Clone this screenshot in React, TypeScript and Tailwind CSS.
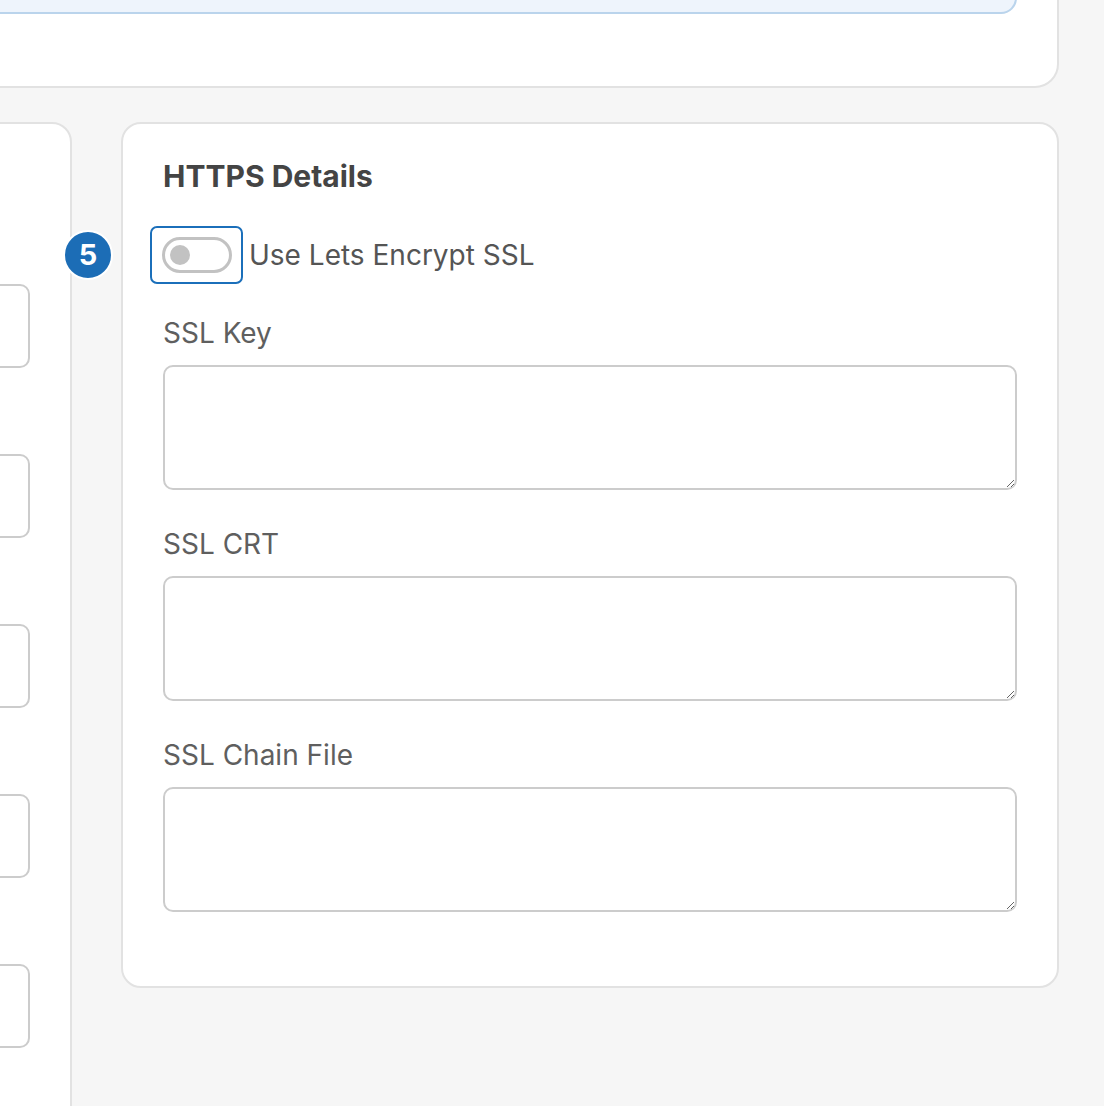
import { useState } from "react";

const FONT = { fontFamily: "Inter, 'Noto Sans', sans-serif" };

const SITE_FIELDS = ["Domain", "Root Path", "PHP Version", "Aliases", "Web Server"];
const SSL_FIELDS = ["SSL Key", "SSL CRT", "SSL Chain File"];

function Toggle({ checked, onChange }: { checked: boolean; onChange: (v: boolean) => void }) {
  return (
    <button
      type="button"
      role="switch"
      aria-checked={checked}
      onClick={() => onChange(!checked)}
      className="flex h-[58px] w-[93px] items-center justify-center rounded-[7px] border-[2.5px] border-[#1b6fba] bg-white"
    >
      <span
        className={
          checked
            ? "flex h-[36px] w-[70px] items-center justify-end rounded-full border-[3px] border-[#1b6fba] bg-[#1b6fba] px-[5px]"
            : "flex h-[36px] w-[70px] items-center justify-start rounded-full border-[3px] border-[#c2c2c2] bg-white px-[5px]"
        }
      >
        <span
          className={
            checked
              ? "block h-[20px] w-[20px] rounded-full bg-white"
              : "block h-[20px] w-[20px] rounded-full bg-[#c2c2c2]"
          }
        />
      </span>
    </button>
  );
}

function FieldLabel({ children }: { children: React.ReactNode }) {
  return <label className="mb-[15px] block text-[28px] leading-[34px] text-[#5f5f5f]">{children}</label>;
}

export default function App() {
  const [letsEncrypt, setLetsEncrypt] = useState(false);

  return (
    <div className="h-screen overflow-hidden bg-[#f6f6f6]" style={FONT}>
      <div className="-ml-[460px] -mt-[160px] flex w-[1519px] flex-col gap-[34px]">
        {/* Top card with info box */}
        <div className="rounded-3xl border-2 border-[#e2e2e2] bg-white px-10 pt-10 pb-[72px]">
          <div className="h-[132px] rounded-2xl border-2 border-[#bad4ec] bg-[#eef4fc]" />
        </div>

        <div className="grid grid-cols-[532px_938px] items-start gap-[49px]">
          {/* Site details: only the right edge of the fields is in view */}
          <div className="h-[1100px] rounded-[20px] border-2 border-[#e2e2e2] bg-white px-10 pt-[160px]">
            <div className="flex flex-col gap-[86px]">
              {SITE_FIELDS.map((f) => (
                <input
                  key={f}
                  aria-label={f}
                  className="block h-[84px] w-full rounded-[10px] border-2 border-[#cccccc] bg-white"
                />
              ))}
            </div>
          </div>

          {/* HTTPS details */}
          <div className="relative rounded-[20px] border-2 border-[#e2e2e2] bg-white px-10 pt-[34px] pb-[74px]">
            <div className="absolute left-[-60px] top-[106px] flex h-[50px] w-[50px] items-center justify-center rounded-full border-2 border-white bg-[#1c6db6] text-[29px] font-bold text-white">
              5
            </div>
            <h2 className="text-[30px] font-bold leading-[36px] text-[#444]">HTTPS Details</h2>
            <div className="-ml-[13px] mt-[32px] flex items-center gap-[6px]">
              <Toggle checked={letsEncrypt} onChange={setLetsEncrypt} />
              <span className="text-[28px] leading-[34px] text-[#555]">Use Lets Encrypt SSL</span>
            </div>
            <div className="mt-[32px] flex flex-col gap-[37px]">
              {SSL_FIELDS.map((f) => (
                <div key={f}>
                  <FieldLabel>{f}</FieldLabel>
                  <textarea className="block h-[125px] w-full rounded-[10px] border-2 border-[#cccccc] bg-white" />
                </div>
              ))}
            </div>
          </div>
        </div>
      </div>
    </div>
  );
}
